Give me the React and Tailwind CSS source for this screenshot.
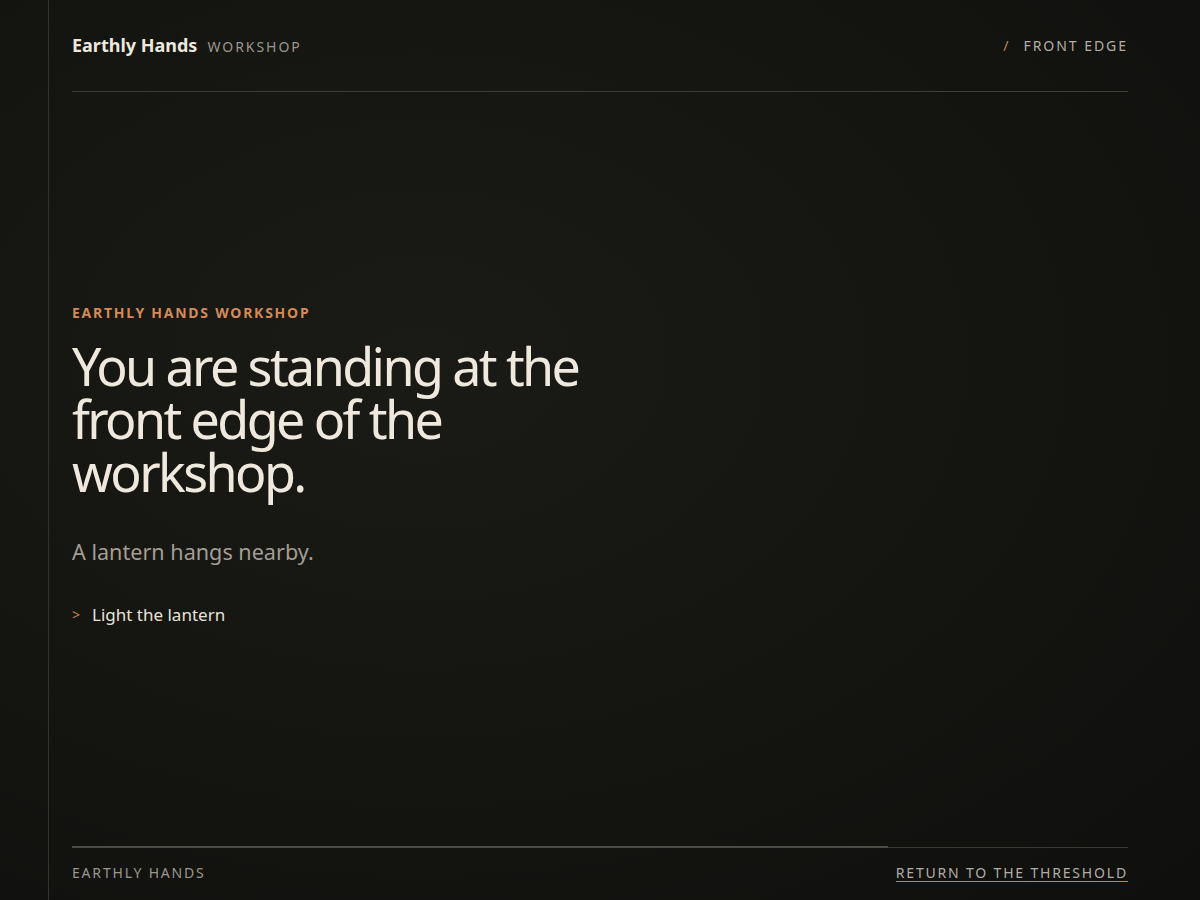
export default function App() {
  return (
    <div
      className="relative min-h-screen w-full overflow-hidden bg-[#11110f] text-[#ece8df]"
      style={{ fontFamily: '"Noto Sans", "Open Sans", sans-serif' }}
    >
      <div className="pointer-events-none absolute inset-0 bg-[radial-gradient(ellipse_at_35%_40%,#1a1a16_0%,#151512_45%,#0f0f0d_100%)]" />
      <div className="pointer-events-none absolute left-[48px] top-0 bottom-0 w-px bg-[#33332e]" />
      <div className="relative flex min-h-screen flex-col pl-[72px] pr-[72px]">
        <header className="flex h-[92px] items-center justify-between border-b border-[#3d3d37]">
          <div className="flex items-baseline gap-[10px]">
            <span className="text-[18px] font-bold text-[#ece8df]">Earthly Hands</span>
            <span className="text-[14px] tracking-[0.14em] text-[#9c978c]">WORKSHOP</span>
          </div>
          <div className="flex items-baseline gap-[13px] text-[14px] tracking-[0.14em]">
            <span className="text-[#c8834f]">/</span>
            <span className="text-[#b3aea3]">FRONT EDGE</span>
          </div>
        </header>

        <main className="flex flex-1 flex-col justify-center pb-[10px]">
          <div className="text-[14px] font-bold tracking-[0.125em] text-[#d38b56]">
            EARTHLY HANDS WORKSHOP
          </div>
          <h1 className="mt-[16px] max-w-[560px] text-[52px] leading-[53px] tracking-[-0.05em] text-[#efe9dd]">
            You are standing at the front edge of the workshop.
          </h1>
          <p className="mt-[38px] text-[21.6px] text-[#a39e93]">A lantern hangs nearby.</p>
          <div className="mt-[34px] flex items-center gap-[12px] text-[17px]">
            <span className="text-[14px] text-[#c8834f]">&gt;</span>
            <span className="text-[#e8e3d8]">Light the lantern</span>
          </div>
        </main>

        <footer className="relative flex h-[53px] items-center justify-between border-t border-[#3a3a34] pb-[4px] text-[14px] tracking-[0.13em]">
          <div className="absolute left-0 top-[-2px] h-[2px] w-[816px] bg-[#4c4b45]" />
          <span className="text-[#9c978c]">EARTHLY HANDS</span>
          <span className="inline-block border-b border-[#c8834f] pt-[2px] leading-[17px] text-[#b3aea3]">
            RETURN TO THE THRESHOLD
          </span>
        </footer>
      </div>
    </div>
  );
}
